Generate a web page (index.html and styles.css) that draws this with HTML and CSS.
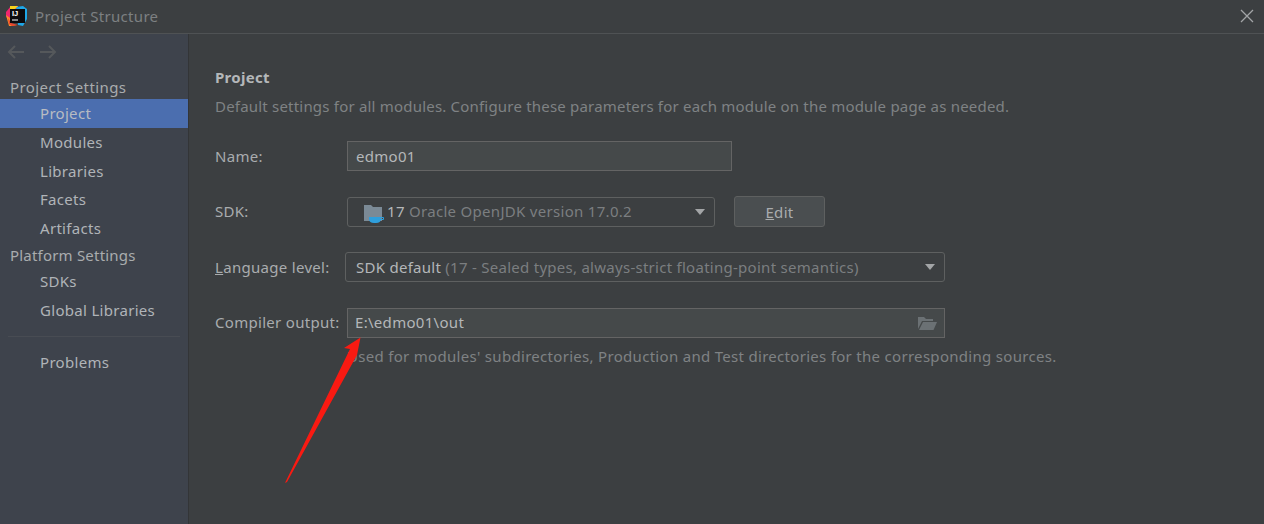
FILE: index.html
```html
<!DOCTYPE html>
<html lang="en">
<head>
<meta charset="utf-8">
<title>Project Structure</title>
<link rel="stylesheet" href="styles.css">
</head>
<body>
<div class="window">
  <header class="titlebar">
    <svg class="logo" width="22" height="22" viewBox="0 0 22 22">
      <path d="M0 6 L5 0 L12 0 L12 6 L4 18 L0 10Z" fill="#f0266f"/>
      <path d="M0 9 L4 12 L5 19 L11 20 L3 20Z" fill="#ff8a2a"/>
      <path d="M2 12 L5 17 L12 19 L6 20 L3 18Z" fill="#e8462e"/>
      <path d="M10 1 L17 0 L21 3 L21 13 L17 20 L12 19Z" fill="#1ea7e8"/>
      <path d="M4 0 L12 0 L9 3 L4 3Z" fill="#f7d21c"/>
      <rect x="4" y="3" width="15" height="14" fill="#0b0b0e"/>
      <text x="6" y="10" class="logo-text">IJ</text>
      <rect x="6" y="13.500" width="6" height="1" fill="#fff"/>
    </svg>
    <span class="title">Project Structure</span>
    <svg class="close" width="14" height="14" viewBox="0 0 14 14"><path d="M1 1 L13 13 M13 1 L1 13" stroke="#a3a5a7" stroke-width="1.300" fill="none"/></svg>
  </header>
  <div class="body">
    <aside class="sidebar">
      <div class="nav-arrows">
        <svg width="18" height="14" viewBox="0 0 18 14"><path d="M17 7 H2 M8 1 L2 7 L8 13" stroke="#55585b" stroke-width="2" fill="none"/></svg>
        <svg width="18" height="14" viewBox="0 0 18 14"><path d="M1 7 H16 M10 1 L16 7 L10 13" stroke="#55585b" stroke-width="2" fill="none"/></svg>
      </div>
      <div class="group first">Project Settings</div>
      <div class="item selected">Project</div>
      <div class="item">Modules</div>
      <div class="item">Libraries</div>
      <div class="item">Facets</div>
      <div class="item">Artifacts</div>
      <div class="group">Platform Settings</div>
      <div class="item">SDKs</div>
      <div class="item">Global Libraries</div>
      <div class="separator"></div>
      <div class="item">Problems</div>
    </aside>
    <main class="content">
      <h1 class="heading">Project</h1>
      <p class="desc">Default settings for all modules. Configure these parameters for each module on the module page as needed.</p>
      <div class="row row-name">
        <label class="label">Name:</label>
        <div class="field field-name">edmo01</div>
      </div>
      <div class="row row-sdk">
        <label class="label label-up">SDK:</label>
        <div class="combo combo-sdk">
          <svg class="sdk-icon" width="20" height="22" viewBox="0 0 20 22">
            <path d="M0 4 H7 L9 6 H18 V20 H0Z" fill="#7b8a96"/>
            <path d="M5 16 H17 V18 C17 20.500 15 22 12 22 H10 C7 22 5 20.500 5 18Z" fill="#2f9fdc"/>
            <path d="M17 16.500 H19.500 V18.500 H16.500" stroke="#2f9fdc" fill="none"/>
          </svg>
          <span class="value">17</span><span class="muted">&nbsp;Oracle OpenJDK version 17.0.2</span>
          <span class="caret"></span>
        </div>
        <button class="button" type="button"><u>E</u>dit</button>
      </div>
      <div class="row row-lang">
        <label class="label"><u>L</u>anguage level:</label>
        <div class="combo combo-lang">
          <span class="value">SDK default</span><span class="muted">&nbsp;(17 - Sealed types, always-strict floating-point semantics)</span>
          <span class="caret"></span>
        </div>
      </div>
      <div class="row row-out">
        <label class="label label-up">Compiler output:</label>
        <div class="field field-out">
          <span>E:\edmo01\out</span>
          <svg class="folder" width="19" height="14" viewBox="0 0 19 14">
            <path d="M0 13 V1 H6 L8 3 H15 V5 H4 L0 13Z" fill="#6b7174"/>
            <path d="M5 6 H19 L15.500 14 H1Z" fill="#6b7174"/>
          </svg>
        </div>
      </div>
      <p class="hint">Used for modules' subdirectories, Production and Test directories for the corresponding sources.</p>
    </main>
  </div>
  <svg class="arrow" width="80" height="150" viewBox="0 0 80 150">
    <path d="M76.500 0.500 L60 11 L66 12 L1 146 L3 145 L73 18 Z" fill="#f91a12"/>
  </svg>
</div>
</body>
</html>
```
FILE: styles.css
```css
* { box-sizing: border-box; }
html, body { margin: 0; height: 100%; }
body { background: #3c3f41; }
.window {
  position: relative;
  width: 1264px;
  height: 524px;
  overflow: hidden;
  display: flex;
  flex-direction: column;
  background: #3c3f41;
  color: #b4b7b9;
  font-family: "Noto Sans", "Open Sans", sans-serif;
  font-size: 15px;
  line-height: 20px;
  letter-spacing: 0.3px;
}
.titlebar {
  height: 34px;
  flex: none;
  display: flex;
  align-items: center;
  padding: 0 10px 2px 6px;
  border-bottom: 1px solid #4f5254;
}
.logo { flex: none; margin-top: 2px; }
.logo-text { font-family: "Liberation Sans", sans-serif; font-size: 7.500px; font-weight: bold; fill: #fff; letter-spacing: 0; }
.title { margin-left: 7px; color: #7d8082; }
.close { margin-left: auto; }
.body { flex: 1; display: flex; min-height: 0; }
.sidebar {
  width: 189px;
  flex: none;
  background: #3e434c;
  border-right: 1px solid #333537;
}
.nav-arrows { display: flex; gap: 14px; padding: 11px 0 0 7px; height: 41px; }
.group { height: 24px; padding-left: 10px; letter-spacing: 0.2px; color: #a9acae; line-height: 24px; }
.group.first { letter-spacing: 0.4px; }
.item { height: 28.800px; padding-left: 40px; line-height: 28.800px; color: #b0b4b8; }
.item.selected { background: #4b6eaf; color: #b8bcc2; }
.separator { height: 1px; background: #484c53; margin: 11px 8px 11px 8px; }
.content { flex: 1; padding: 33px 0 0 26px; min-width: 0; }
.heading { margin: 0; font-size: 15px; font-weight: 700; line-height: 20px; color: #b4b7b9; }
.desc { margin: 9px 0 0; color: #7f8284; line-height: 20px; letter-spacing: 0.2px; }
.row { display: flex; align-items: center; }
.row-name { margin-top: 25px; }
.row-sdk { margin-top: 25px; }
.row-lang { margin-top: 25px; }
.row-out { margin-top: 26px; }
.label { width: 132px; flex: none; color: #a9acae; }
.label-up { padding-bottom: 2px; }
.field {
  height: 30px;
  display: flex;
  align-items: center;
  padding: 0 8px;
  background: #45494a;
  border: 1px solid #646464;
  color: #b4b7b9;
}
.field-name { width: 385px; }
.field-out { width: 598px; justify-content: space-between; padding: 0 7px 2px; }
.folder { flex: none; margin-top: 2px; }
.combo {
  height: 30px;
  display: flex;
  align-items: center;
  padding: 0 8px;
  border: 1px solid #5e6060;
  border-radius: 3px;
  position: relative;
}
.combo-sdk { width: 368px; padding-left: 16px; padding-bottom: 2px; }
.combo-lang { width: 600px; margin-left: -2px; padding-left: 10px; letter-spacing: 0.27px; }
.sdk-icon { flex: none; margin-right: 3px; margin-top: 2px; }
.value { color: #b4b7b9; }
.muted { color: #7b7e80; }
.caret {
  margin-left: auto;
  margin-right: 1px;
  width: 0;
  height: 0;
  border-left: 5.500px solid transparent;
  border-right: 5.500px solid transparent;
  border-top: 6px solid #a3a5a7;
}
.combo-sdk .caret { margin-top: 2px; }
.button {
  margin-left: 19px;
  width: 91px;
  height: 31px;
  background: #4a4e50;
  border: 1px solid #5e6060;
  border-radius: 3px;
  color: #a9acae;
  font: inherit;
  letter-spacing: inherit;
  padding: 0;
}
.hint { margin: 8px 0 0 132px; color: #7f8284; }
.arrow { position: absolute; left: 284px; top: 337px; }
```
